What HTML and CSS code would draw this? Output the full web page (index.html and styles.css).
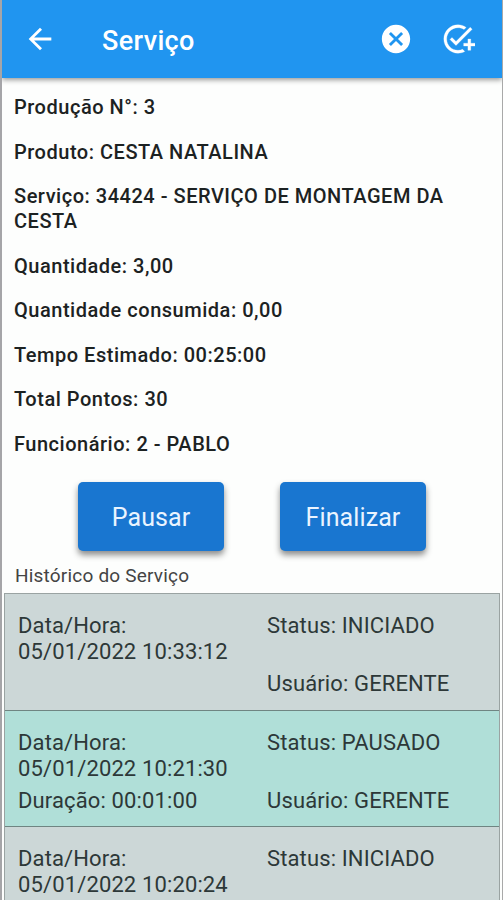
FILE: index.html
```html
<!DOCTYPE html>
<html lang="pt-br">
<head>
    <meta charset="utf-8">
    <title>Serviço</title>
    <link rel="stylesheet" href="styles.css">
</head>
<body>
<div class="app">
    <header class="appbar">
        <svg class="back" viewBox="0 0 24 24"><path d="M20 11H7.83l5.59-5.59L12 4l-8 8 8 8 1.41-1.41L7.83 13H20v-2z"/></svg>
        <h1 class="title">Serviço</h1>
        <svg class="cancel" viewBox="0 0 24 24"><path d="M12 2C6.47 2 2 6.47 2 12s4.47 10 10 10 10-4.47 10-10S17.53 2 12 2zm5 13.59L15.59 17 12 13.41 8.41 17 7 15.59 10.59 12 7 8.41 8.41 7 12 10.59 15.59 7 17 8.41 13.41 12 17 15.59z"/></svg>
        <svg class="add-task" viewBox="0 0 24 24"><path d="M22 5.18L10.59 16.6l-4.24-4.24 1.41-1.41 2.83 2.83 10-10L22 5.18zM12 20c-4.41 0-8-3.59-8-8s3.59-8 8-8c1.57 0 3.04.46 4.28 1.25l1.45-1.45C16.1 2.67 14.13 2 12 2 6.48 2 2 6.48 2 12s4.48 10 10 10c1.73 0 3.36-.44 4.78-1.22l-1.5-1.5c-1 .46-2.11.72-3.28.72zm7-5h-3v2h3v3h2v-3h3v-2h-3v-3h-2v3z"/></svg>
    </header>
    <main>
        <div class="info">
            <p>Produção N°: 3</p>
            <p>Produto: CESTA NATALINA</p>
            <p>Serviço: 34424 - SERVIÇO DE MONTAGEM DA CESTA</p>
            <p>Quantidade: 3,00</p>
            <p>Quantidade consumida: 0,00</p>
            <p>Tempo Estimado: 00:25:00</p>
            <p>Total Pontos: 30</p>
            <p>Funcionário: 2 - PABLO</p>
        </div>
        <div class="buttons">
            <button class="btn">Pausar</button>
            <button class="btn">Finalizar</button>
        </div>
        <h2 class="subtitle">Histórico do Serviço</h2>
        <ul class="history">
            <li>
                <div class="col">
                    <p>Data/Hora:<br>05/01/2022 10:33:12</p>
                </div>
                <div class="col">
                    <p>Status: INICIADO</p>
                    <p>Usuário: GERENTE</p>
                </div>
            </li>
            <li class="paused">
                <div class="col">
                    <p>Data/Hora:<br>05/01/2022 10:21:30</p>
                    <p>Duração: 00:01:00</p>
                </div>
                <div class="col">
                    <p>Status: PAUSADO</p>
                    <p>Usuário: GERENTE</p>
                </div>
            </li>
            <li>
                <div class="col">
                    <p>Data/Hora:<br>05/01/2022 10:20:24</p>
                </div>
                <div class="col">
                    <p>Status: INICIADO</p>
                </div>
            </li>
        </ul>
    </main>
</div>
</body>
</html>
```
FILE: styles.css
```css
* {
    margin: 0;
    padding: 0;
    box-sizing: border-box;
}
body {
    font-family: Roboto, "Liberation Sans", sans-serif;
    background-color: #fdfefd;
    color: #1c2222;
}
ul {
    list-style: none;
}
.app {
    height: 900px;
    overflow: hidden;
    border-left: 2px solid #a5a5a8;
    border-right: 1px solid #a9a9a9;
}
.appbar {
    position: relative;
    display: flex;
    align-items: center;
    height: 78px;
    padding: 0 27px 0 21px;
    background-color: #2095f0;
    color: #fff;
    box-shadow: 0 2px 5px rgba(0,0,0,.4);
}
.appbar svg {
    width: 34px;
    height: 34px;
    fill: #fff;
}
.title {
    flex: 1;
    padding: 3px 0 0 45px;
    font-size: 27px;
    font-weight: 500;
    letter-spacing: .35px;
}
.appbar .cancel {
    margin-right: 28px;
}
.appbar .add-task {
    stroke: #fff;
    stroke-width: .2;
}
.info {
    padding: 17px 40px 0 12px;
    font-size: 20px;
    font-weight: 500;
    line-height: 25px;
    letter-spacing: .52px;
}
.info p {
    margin-bottom: 19.5px;
}
.buttons {
    display: flex;
    gap: 56px;
    padding: 6px 0 0 76px;
}
.btn {
    width: 146px;
    height: 69px;
    padding-top: 2px;
    border: 0;
    border-radius: 5px;
    background-color: #1976d0;
    color: #eaf4ff;
    font: 400 25px Roboto, "Liberation Sans", sans-serif;
    letter-spacing: .1px;
    box-shadow: 0 4px 6px rgba(0,0,0,.45);
}
.subtitle {
    padding: 13px 0 0 13px;
    font-size: 19px;
    font-weight: 400;
    line-height: 24px;
    letter-spacing: .2px;
    color: #444;
}
.history {
    margin: 5px 2px 0 2px;
    border: 1px solid #9aa3a2;
    font-size: 22px;
    line-height: 26px;
    letter-spacing: .13px;
    color: #2d3838;
}
.history li {
    display: flex;
    height: 116.7px;
    padding: 19px 0 0 13px;
    background-color: #ccd7d7;
    border-bottom: 1px solid #6f8582;
}
.history .paused {
    background-color: #b0dfd8;
}
.col {
    flex: none;
    width: 249px;
}
.col + .col {
    width: 230px;
}
.col p {
    min-height: 52px;
    margin-bottom: 6px;
    white-space: nowrap;
}
```
